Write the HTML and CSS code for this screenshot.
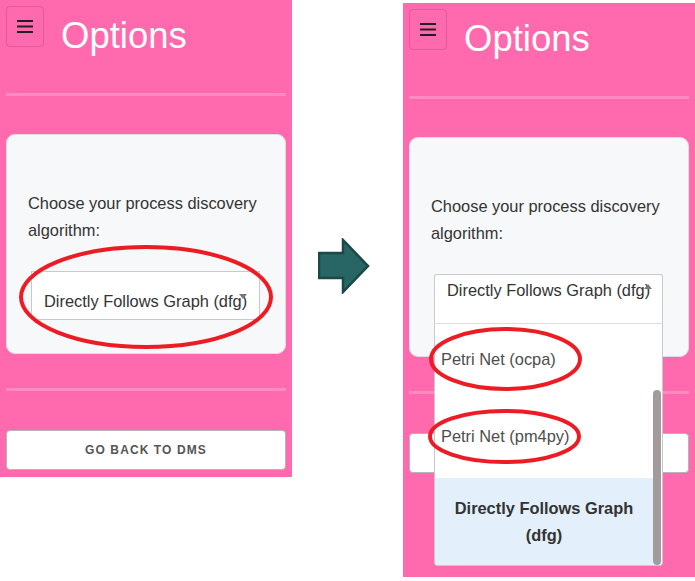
FILE: index.html
```html
<!DOCTYPE html>
<html lang="en">
<head>
<meta charset="utf-8">
<title>Options</title>
<link rel="stylesheet" href="styles.css">
</head>
<body>
<div class="stage">
  <section class="phone phone-left">
    <header class="topbar">
      <button class="menu-btn" aria-label="menu">
        <svg width="16" height="13" viewBox="0 0 16 13"><path d="M0 1h16M0 6.5h16M0 12h16" stroke="#1f1f1f" stroke-width="1.8"/></svg>
      </button>
      <h1 class="title">Options</h1>
    </header>
    <div class="rule rule-top"></div>
    <div class="card">
      <p class="prompt">Choose your process discovery algorithm:</p>
      <div class="select">
        <span class="select-value">Directly Follows Graph (dfg)</span>
        <span class="caret caret-down"></span>
      </div>
    </div>
    <div class="rule rule-bottom"></div>
    <button class="back-btn">GO BACK TO DMS</button>
  </section>

  <div class="connector">
    <svg width="52" height="56" viewBox="0 0 52 56"><polygon points="1,15 25,15 25,2 50,28 25,54 25,40 1,40" fill="#286565" stroke="#1c4848" stroke-width="2.5" stroke-linejoin="miter"/></svg>
  </div>

  <section class="phone phone-right">
    <header class="topbar">
      <button class="menu-btn" aria-label="menu">
        <svg width="16" height="13" viewBox="0 0 16 13"><path d="M0 1h16M0 6.5h16M0 12h16" stroke="#1f1f1f" stroke-width="1.8"/></svg>
      </button>
      <h1 class="title">Options</h1>
    </header>
    <div class="rule rule-top"></div>
    <div class="card">
      <p class="prompt">Choose your process discovery algorithm:</p>
      <div class="select select-open">
        <span class="select-value">Directly Follows Graph (dfg)</span>
        <span class="caret caret-up"></span>
        <div class="dropdown">
          <div class="options">
            <div class="option option-first">Petri Net (ocpa)</div>
            <div class="option option-second">Petri Net (pm4py)</div>
            <div class="option option-selected">Directly Follows Graph<br>(dfg)</div>
          </div>
          <div class="scrollbar"><div class="thumb"></div></div>
        </div>
      </div>
    </div>
    <div class="rule rule-bottom"></div>
    <button class="back-btn">GO BACK TO DMS</button>
  </section>
</div>

<svg class="annotations" width="695" height="581" viewBox="0 0 695 581">
  <ellipse cx="146" cy="297" rx="125" ry="50" fill="none" stroke="#ed1c24" stroke-width="4"/>
  <ellipse cx="505.5" cy="359" rx="74.5" ry="30" fill="none" stroke="#ed1c24" stroke-width="4"/>
  <ellipse cx="504.5" cy="436.5" rx="74.5" ry="25.5" fill="none" stroke="#ed1c24" stroke-width="4"/>
</svg>
</body>
</html>
```

FILE: styles.css
```css
html, body {
  margin: 0;
  padding: 0;
}

body {
  position: relative;
  width: 695px;
  height: 581px;
  overflow: hidden;
  background: #ffffff;
  font-family: "Liberation Sans", Arial, sans-serif;
}

.stage {
  display: flex;
  align-items: flex-start;
}

.phone {
  position: relative;
  flex-shrink: 0;
  box-sizing: border-box;
  width: 292px;
  padding: 6px;
  background: #ff69ad;
}

.phone-left {
  height: 477px;
}

.phone-right {
  height: 574px;
  margin-top: 3px;
}

.connector {
  flex-shrink: 0;
  box-sizing: border-box;
  width: 111px;
  padding: 238px 0 0 26px;
}

.connector svg {
  display: block;
}

.topbar {
  display: flex;
  height: 48px;
}

.menu-btn {
  display: flex;
  align-items: center;
  justify-content: center;
  box-sizing: border-box;
  width: 38px;
  height: 41px;
  padding: 0;
  border: 1px solid rgba(0, 0, 0, 0.12);
  border-radius: 4px;
  background: transparent;
}

.menu-btn svg {
  display: block;
}

.title {
  margin: 12px 0 0 17px;
  font-size: 36.5px;
  font-weight: 400;
  line-height: 36px;
  color: #ffffff;
}

.rule {
  height: 3px;
  background: rgba(255, 255, 255, 0.24);
}

.rule-top {
  margin-top: 39px;
}

.rule-bottom {
  margin-top: 34px;
}

.card {
  box-sizing: border-box;
  height: 220px;
  margin-top: 38px;
  padding: 55px 21px 0;
  background: #f7f8fa;
  border: 1px solid #dedede;
  border-radius: 9px;
}

.prompt {
  margin: 0;
  font-size: 16.4px;
  line-height: 27px;
  color: #333333;
}

.select {
  position: relative;
  box-sizing: border-box;
  width: 229px;
  height: 49px;
  margin: 27px 0 0 3px;
  padding: 19px 0 0 12px;
  background: #ffffff;
  border: 1px solid #c9c9c9;
  font-size: 16.4px;
  line-height: 20px;
  color: #333333;
  white-space: nowrap;
}

.select-open {
  height: 50px;
  padding-top: 5px;
  border-radius: 3px 3px 0 0;
  border-bottom-color: #dddddd;
  z-index: 2;
}

.caret {
  position: absolute;
  width: 0;
  height: 0;
  border-left: 4.5px solid transparent;
  border-right: 4.5px solid transparent;
}

.caret-down {
  right: 12px;
  top: 22px;
  border-top: 5px solid #777777;
}

.caret-up {
  right: 10px;
  top: 9px;
  border-bottom: 5px solid #777777;
}

.dropdown {
  position: absolute;
  left: -1px;
  top: calc(100% + 1px);
  display: flex;
  box-sizing: border-box;
  width: 229px;
  height: 242px;
  background: #ffffff;
  border: 1px solid #c9c9c9;
  border-top: none;
  border-radius: 0 0 4px 4px;
  overflow: hidden;
}

.options {
  flex: 1;
  display: flex;
  flex-direction: column;
}

.option {
  display: flex;
  align-items: center;
  padding-left: 6px;
  font-size: 16.4px;
  color: #4d4d4d;
}

.option-first {
  height: 69px;
}

.option-second {
  height: 85px;
}

.option-selected {
  flex: 1;
  justify-content: center;
  padding: 0;
  background: #e3f0fc;
  font-weight: 700;
  line-height: 27px;
  text-align: center;
  color: #333333;
}

.scrollbar {
  position: relative;
  width: 9px;
}

.thumb {
  position: absolute;
  left: 0;
  right: 1px;
  top: 66px;
  bottom: 0;
  background: #a19b9b;
  border-radius: 4px;
}

.back-btn {
  display: block;
  box-sizing: border-box;
  width: 100%;
  height: 40px;
  margin-top: 39px;
  padding: 0;
  background: #ffffff;
  border: 1px solid #b5b5b5;
  border-radius: 4px;
  font-family: "Liberation Sans", Arial, sans-serif;
  font-size: 12px;
  font-weight: 700;
  letter-spacing: 1.1px;
  color: #555555;
}

.annotations {
  position: absolute;
  left: 0;
  top: 0;
  z-index: 10;
  pointer-events: none;
}
```
